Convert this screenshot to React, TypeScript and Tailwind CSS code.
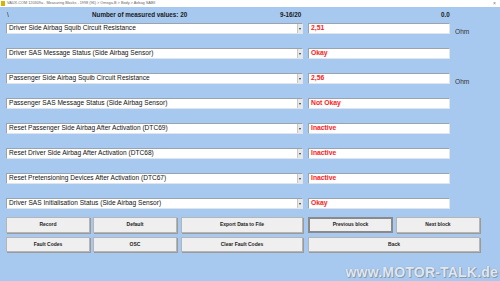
import React from 'react';

const rows = [
  { label: 'Driver Side Airbag Squib Circuit Resistance', value: '2,51', unit: 'Ohm' },
  { label: 'Driver SAS Message Status (Side Airbag Sensor)', value: 'Okay' },
  { label: 'Passenger Side Airbag Squib Circuit Resistance', value: '2,56', unit: 'Ohm' },
  { label: 'Passenger SAS Message Status (Side Airbag Sensor)', value: 'Not Okay' },
  { label: 'Reset Passenger Side Airbag After Activation (DTC69)', value: 'Inactive' },
  { label: 'Reset Driver Side Airbag After Activation (DTC68)', value: 'Inactive' },
  { label: 'Reset Pretensioning Devices After Activation (DTC67)', value: 'Inactive' },
  { label: 'Driver SAS Initialisation Status (Side Airbag Sensor)', value: 'Okay' },
];

const Btn: React.FC<{ label: string; w: string; focused?: boolean }> = ({ label, w, focused }) => (
  <div
    className={`${w} h-full flex items-center justify-center bg-[#efefef] font-bold text-[5px] text-[#222] ${
      focused ? 'border-2 border-[#8a8a8a]' : 'border border-[#b5b5b5] shadow-[1px_1px_0_#9a9a9a]'
    }`}
  >
    {label}
  </div>
);

const App: React.FC = () => {
  return (
    <div className="w-[500px] h-[281px] bg-[#a8c9ef] relative overflow-hidden flex flex-col font-['Liberation_Sans',Arial,sans-serif]">
      {/* Window title */}
      <div className="h-[7px] bg-white flex items-center pl-[1px] pr-[4px] shrink-0">
        <div className="w-[4px] h-[5px] bg-[#d8b400] mr-[2px]" />
        <span className="text-[3.8px] leading-none text-[#666]">
          VAUX-COM 120309a - Measuring Blocks - 1998 (96) &gt; Omega-B &gt; Body &gt; Airbag SABII
        </span>
        <span className="ml-auto text-[5px] leading-none text-[#777]">×</span>
      </div>

      {/* Header */}
      <div className="h-[16px] flex items-center pl-[7px] text-[6.3px] font-bold text-[#1a1a1a] shrink-0 pb-[1px]">
        <span className="w-[85px] font-normal">\</span>
        <span className="w-[188px]">Number of measured values: 20</span>
        <span className="w-[161px]">9-16/20</span>
        <span>0.0</span>
      </div>

      {/* Measuring rows */}
      <div className="flex flex-col gap-[14px] pl-[6px]">
        {rows.map((r) => (
          <div key={r.label} className="flex h-[11px]">
            <div className="w-[297px] h-full bg-white border border-[#9aa4ae] border-b-[#dfe5ea] border-r-[#dfe5ea] flex items-center">
              <span className="flex-1 pl-[2px] text-[6.6px] leading-none text-[#111] whitespace-nowrap">{r.label}</span>
              <div className="w-[5px] h-[9px] bg-[#e8e8e8] border-l border-[#c8c8c8] flex items-center justify-center">
                <div className="w-0 h-0 border-l-[1.5px] border-r-[1.5px] border-t-[2px] border-l-transparent border-r-transparent border-t-[#333]" />
              </div>
            </div>
            <div className="ml-[5px] w-[142px] h-full bg-white border border-[#9aa4ae] border-b-[#dfe5ea] border-r-[#dfe5ea] flex items-center pl-[2px]">
              <span className="text-[6.8px] leading-none font-bold text-[#ff1a1a]">{r.value}</span>
            </div>
            {r.unit && (
              <span className="ml-[5px] mt-[6px] text-[6.6px] leading-none text-[#333]">{r.unit}</span>
            )}
          </div>
        ))}
      </div>

      {/* Buttons */}
      <div className="mt-[8px] pl-[6px] flex flex-col gap-[4px]">
        <div className="flex h-[16px]">
          <Btn label="Record" w="w-[84px]" />
          <div className="w-[3px]" />
          <Btn label="Default" w="w-[84px]" />
          <div className="w-[4px]" />
          <Btn label="Export Data to File" w="w-[122px]" />
          <div className="w-[5px]" />
          <Btn label="Previous block" w="w-[85px]" focused />
          <div className="w-[3px]" />
          <Btn label="Next block" w="w-[84px]" />
        </div>
        <div className="flex h-[15px]">
          <Btn label="Fault Codes" w="w-[84px]" />
          <div className="w-[3px]" />
          <Btn label="OSC" w="w-[84px]" />
          <div className="w-[4px]" />
          <Btn label="Clear Fault Codes" w="w-[122px]" />
          <div className="w-[5px]" />
          <Btn label="Back" w="w-[172px]" />
        </div>
      </div>

      {/* Watermark */}
      <div className="absolute right-[2px] bottom-[2px] text-[14px] font-bold leading-none text-[#dfe8f2] [text-shadow:0_0_1px_#7f8ea0,1px_1px_0_#8e9cab] tracking-[0.2px]">
        www.MOTOR-TALK.de
      </div>
    </div>
  );
};

export default App;
